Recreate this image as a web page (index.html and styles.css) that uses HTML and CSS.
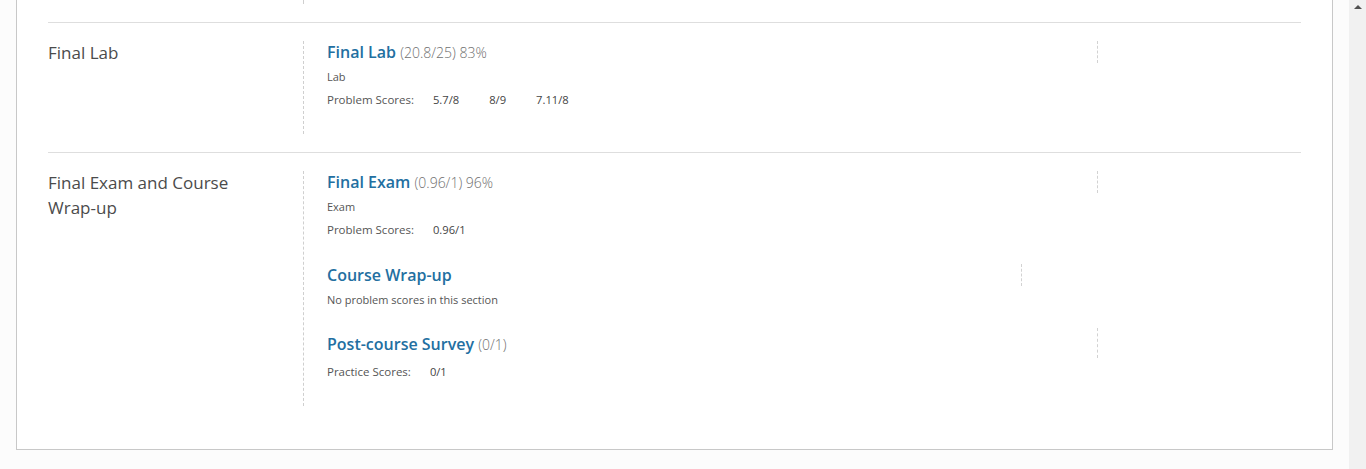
FILE: index.html
```html
<!DOCTYPE html>
<html lang="en">
<head>
<meta charset="utf-8">
<title>Course Progress</title>
<link rel="stylesheet" href="styles.css">
</head>
<body>
<div class="page">
  <main class="main">
    <div class="card">
      <section class="chapter chapter-tail">
        <div class="chapter-title"></div>
        <div class="sections"><div class="tail-space"></div></div>
      </section>

      <section class="chapter">
        <h2 class="chapter-title">Final Lab</h2>
        <div class="sections">
          <div class="subsection">
            <div class="sub-head">
              <h3 class="sub-title"><a href="#">Final Lab</a> <span class="sub-score">(20.8/25) 83%</span></h3>
              <div class="marker"></div>
            </div>
            <p class="sub-format">Lab</p>
            <dl class="scores">
              <dt>Problem Scores:</dt>
              <dd>5.7/8</dd>
              <dd>8/9</dd>
              <dd>7.11/8</dd>
            </dl>
          </div>
        </div>
      </section>

      <section class="chapter">
        <h2 class="chapter-title">Final Exam and Course Wrap-up</h2>
        <div class="sections">
          <div class="subsection">
            <div class="sub-head">
              <h3 class="sub-title"><a href="#">Final Exam</a> <span class="sub-score">(0.96/1) 96%</span></h3>
              <div class="marker"></div>
            </div>
            <p class="sub-format">Exam</p>
            <dl class="scores">
              <dt>Problem Scores:</dt>
              <dd>0.96/1</dd>
            </dl>
          </div>
          <div class="subsection subsection-empty">
            <div class="sub-head">
              <h3 class="sub-title"><a href="#">Course Wrap-up</a></h3>
              <div class="marker marker-wide"></div>
            </div>
            <p class="sub-format">No problem scores in this section</p>
          </div>
          <div class="subsection">
            <div class="sub-head">
              <h3 class="sub-title"><a href="#">Post-course Survey</a> <span class="sub-score">(0/1)</span></h3>
              <div class="marker marker-tall"></div>
            </div>
            <dl class="scores scores-direct">
              <dt>Practice Scores:</dt>
              <dd>0/1</dd>
            </dl>
          </div>
        </div>
      </section>
    </div>
  </main>
  <div class="scrollbar"><div class="scroll-up"></div></div>
</div>
</body>
</html>
```

FILE: styles.css
```css
* { box-sizing: border-box; }

html, body {
  margin: 0;
  padding: 0;
  height: 100%;
  overflow: hidden;
}

body {
  background: #fcfcfc;
  font-family: "Open Sans", "Liberation Sans", sans-serif;
  color: #4a4a4a;
}

.page {
  display: flex;
  height: 469px;
}

.main {
  flex: 1;
  min-width: 0;
}

.card {
  margin: 0 16px;
  background: #fff;
  border: 1px solid #c8c8c8;
  border-top: none;
  padding: 0 31px 25px 31px;
}

.chapter {
  display: flex;
  padding: 18px 0;
  border-bottom: 1px solid #dedede;
}

.chapter:last-child {
  border-bottom: none;
}

.chapter-tail {
  padding-top: 0;
}

.tail-space {
  height: 4px;
}

.chapter-title {
  width: 255px;
  flex: none;
  margin: -1px 0 0 0;
  padding-right: 40px;
  font-size: 17px;
  font-weight: 400;
  line-height: 25px;
  color: #4b4b4b;
}

.sections {
  flex: 1;
  border-left: 1px dashed #cfcfcf;
  padding-left: 23px;
}

.subsection {
  margin-bottom: 26px;
}

.subsection-empty {
  margin-bottom: 25px;
}

.sub-head {
  display: flex;
  align-items: flex-start;
}

.sub-title {
  flex: 1;
  margin: 0;
  font-size: 16px;
  line-height: 22px;
  font-weight: 600;
}

.sub-title a {
  color: #236fa1;
  text-decoration: none;
}

.sub-score {
  font-size: 14px;
  line-height: 16px;
  font-weight: 300;
  color: #707070;
}

.marker {
  flex: none;
  width: 204px;
  height: 22px;
  border-left: 1px dashed #d2d2d2;
}

.marker-wide {
  width: 280px;
}

.marker-tall {
  height: 30px;
  margin: -5px 0 -3px 0;
}

.sub-format {
  margin: 6px 0 0 0;
  font-size: 11px;
  line-height: 16px;
  color: #555;
}

.scores {
  display: flex;
  margin: 7px 0 0 0;
  font-size: 11.5px;
  line-height: 16px;
}

.scores-direct {
  margin-top: 9px;
}

.scores dt {
  color: #555;
  margin-right: 19px;
}

.scores dd {
  margin: 0 30px 0 0;
  font-size: 11.2px;
  color: #444;
}

.scrollbar {
  width: 17px;
  flex: none;
  background: #f1f1f1;
  display: flex;
  justify-content: center;
  padding-top: 5px;
}

.scroll-up {
  width: 0;
  height: 0;
  border-left: 4px solid transparent;
  border-right: 4px solid transparent;
  border-bottom: 4px solid #505050;
}
```
